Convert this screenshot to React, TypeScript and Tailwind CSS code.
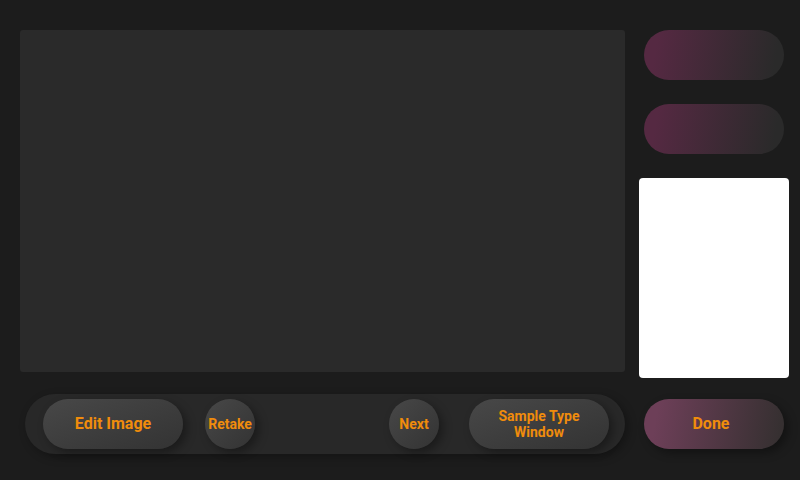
export default function App() {
    const btn =
        "flex items-center justify-center rounded-full bg-gradient-to-br from-[#484848] to-[#333333] shadow-[4px_4px_10px_rgba(0,0,0,0.35)] text-[#f08c0c] font-bold";

    return (
        <div
            className="w-[800px] h-[480px] bg-[#1c1c1c] flex pt-[30px] pl-[20px]"
            style={{ fontFamily: "Roboto, 'Liberation Sans', sans-serif" }}
        >
            {/* Left column */}
            <div className="flex flex-col w-[605px]">
                <div className="h-[342px] rounded-[3px] bg-[#2a2a2a]" />

                {/* Bottom bar */}
                <div className="mt-[22px] ml-[5px] w-[600px] h-[60px] rounded-full bg-[#282828] shadow-[3px_3px_10px_rgba(0,0,0,0.3)] flex items-center pl-[18px]">
                    <button className={`${btn} w-[140px] h-[50px] text-[16px]`}>Edit Image</button>
                    <button className={`${btn} ml-[22px] w-[50px] h-[50px] text-[14px]`}>Retake</button>
                    <button className={`${btn} ml-[134px] w-[50px] h-[50px] text-[14px]`}>Next</button>
                    <button className={`${btn} ml-[30px] w-[140px] h-[50px] text-[14px] leading-[16px] text-center`}>
                        Sample Type
                        <br />
                        Window
                    </button>
                </div>
            </div>

            {/* Right column */}
            <div className="flex flex-col ml-[14px] w-[150px]">
                <div className="mx-[5px] h-[50px] rounded-full bg-[linear-gradient(100deg,#552942_10%,#2a2a2a_92%)]" />
                <div className="mx-[5px] mt-[24px] h-[50px] rounded-full bg-[linear-gradient(100deg,#552942_10%,#2a2a2a_92%)]" />
                <div className="mt-[24px] h-[200px] rounded-[4px] bg-white" />
                <button className="mx-[5px] mt-[21px] h-[50px] pr-[6px] rounded-full bg-[linear-gradient(100deg,#6d3f58_10%,#363031_95%)] shadow-[4px_4px_10px_rgba(0,0,0,0.35)] text-[#f08c0c] font-bold text-[16px]">
                    Done
                </button>
            </div>
        </div>
    );
}
